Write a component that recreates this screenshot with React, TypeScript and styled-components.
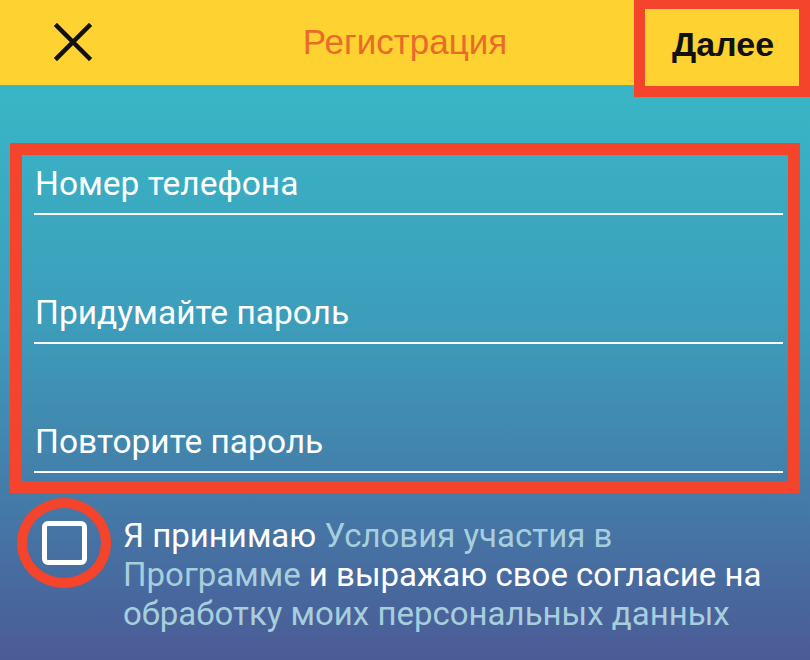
import React, { useState } from "react";
import styled, { createGlobalStyle } from "styled-components";

const GlobalStyle = createGlobalStyle`
    html, body {
        margin: 0;
        padding: 0;
        height: 100%;
    }
    body {
        font-family: Roboto, "Liberation Sans", sans-serif;
    }
    #root {
        min-height: 100vh;
    }
`

const Screen = styled.div`
    width: 810px;
    height: 660px;
    display: flex;
    flex-direction: column;
    overflow: hidden;
    background: linear-gradient(180deg, #37c0cb 0%, #3d9cba 50%, #4b5b96 100%);
`

const Header = styled.header`
    position: relative;
    height: 85px;
    flex-shrink: 0;
    background-color: #fdd231;
    display: flex;
    align-items: center;
    justify-content: center;
`

const CloseButton = styled.button`
    position: absolute;
    left: 53px;
    top: 22px;
    width: 40px;
    height: 40px;
    padding: 0;
    border: none;
    background: none;
    display: flex;
    align-items: center;
    justify-content: center;
    cursor: pointer;
`

const Title = styled.h1`
    margin: 0 0 2px 0;
    font-family: "Liberation Sans", Arial, sans-serif;
    font-weight: 400;
    font-size: 35px;
    color: #e96b29;
`

// annotation frame that sits over the header
const NextButton = styled.button`
    position: absolute;
    top: 0;
    right: 0;
    width: 176px;
    height: 97px;
    box-sizing: border-box;
    border: 11px solid #f4442b;
    border-top-width: 9px;
    background-color: #fdd231;
    font-family: "Liberation Sans", Arial, sans-serif;
    font-weight: 700;
    font-size: 34px;
    color: #111;
    padding: 0 0 6px 2px;
    cursor: pointer;
    z-index: 2;
`

const Content = styled.main`
    display: flex;
    flex-direction: column;
    padding: 58px 10px 0 10px;
`

const FormFrame = styled.div<{ $highlight?: boolean }>`
    display: flex;
    flex-direction: column;
    gap: 77px;
    padding: 8px 5px 8px 12px;
    border: 12px solid ${p => (p.$highlight ? "#f4442b" : "transparent")};
`

const Field = styled.label`
    display: block;
    padding: 0 0 10px 1px;
    border-bottom: 2px solid #ffffff;
`

const Input = styled.input`
    display: block;
    width: 100%;
    box-sizing: border-box;
    height: 40px;
    padding: 0;
    border: none;
    outline: none;
    background: transparent;
    font-family: Roboto, "Liberation Sans", sans-serif;
    font-size: 33.5px;
    color: #fff;
    &::placeholder {
        color: #fff;
        opacity: 1;
    }
`

const ConsentRow = styled.div`
    display: flex;
    align-items: flex-start;
    margin-top: 5px;
    padding-left: 7px;
    gap: 12px;
`

const CheckRing = styled.div`
    flex-shrink: 0;
    width: 94px;
    height: 90px;
    box-sizing: border-box;
    border: 10px solid #f4442b;
    border-radius: 50%;
    display: flex;
    align-items: center;
    justify-content: center;
`

const CheckBox = styled.button<{ $checked: boolean }>`
    width: 45px;
    height: 44px;
    box-sizing: border-box;
    border: 5px solid #fff;
    border-radius: 6px;
    background: ${p => (p.$checked ? "rgba(255,255,255,0.25)" : "transparent")};
    padding: 0;
    cursor: pointer;
`

const ConsentText = styled.p`
    margin: 18px 0 0 0;
    font-family: Roboto, "Liberation Sans", sans-serif;
    font-size: 33px;
    line-height: 39px;
    color: #fff;
    white-space: nowrap;
`

const Link = styled.a`
    color: #a6cedd;
    text-decoration: none;
`

const fields = ["Номер телефона", "Придумайте пароль", "Повторите пароль"];

const App = () => {
    const [checked, setChecked] = useState(false);

    return (
        <>
            <GlobalStyle />
            <Screen>
                <Header>
                    <CloseButton aria-label="Закрыть">
                        <svg width="38" height="38" viewBox="0 0 38 38">
                            <path d="M3 3 L35 35 M35 3 L3 35" stroke="#111" strokeWidth="4.5" strokeLinecap="square" />
                        </svg>
                    </CloseButton>
                    <Title>Регистрация</Title>
                    <NextButton>Далее</NextButton>
                </Header>
                <Content>
                    <FormFrame $highlight>
                        {fields.map(f => (
                            <Field key={f}>
                                <Input placeholder={f} type={f === "Номер телефона" ? "tel" : "password"} />
                            </Field>
                        ))}
                    </FormFrame>
                    <ConsentRow>
                        <CheckRing>
                            <CheckBox $checked={checked} onClick={() => setChecked(!checked)} />
                        </CheckRing>
                        <ConsentText>
                            Я принимаю <Link href="#">Условия участия в</Link>
                            <br />
                            <Link href="#">Программе</Link> и выражаю свое согласие на
                            <br />
                            <Link href="#">обработку моих персональных данных</Link>
                        </ConsentText>
                    </ConsentRow>
                </Content>
            </Screen>
        </>
    )
}

export default App;
